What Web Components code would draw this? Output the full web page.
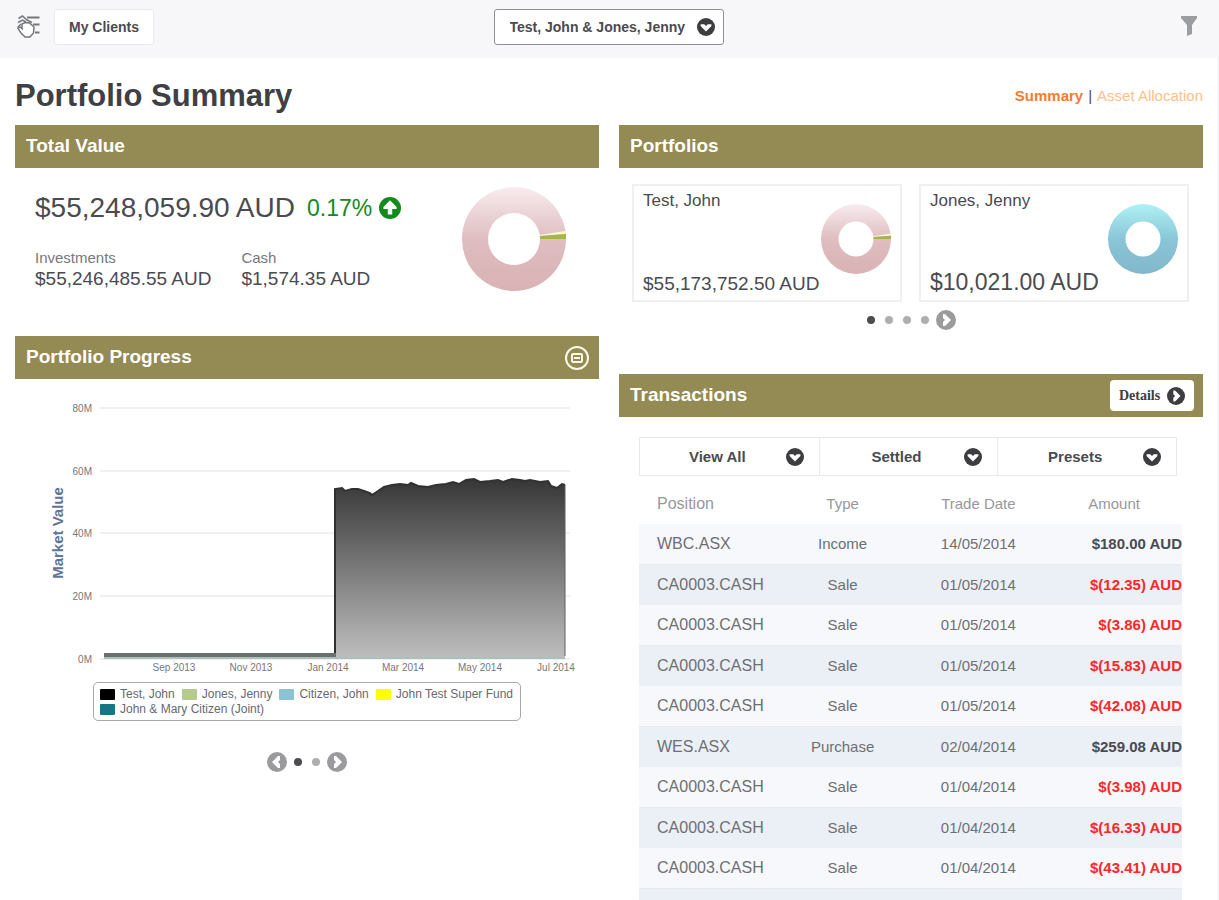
<!DOCTYPE html>
<html lang="en">
<head>
  <meta charset="UTF-8">
  <meta name="viewport" content="width=device-width, initial-scale=1">
  <title>Portfolio Summary</title>
  <style>
    :root {
      --bar: #938a54;
      --ink: #4a4b50;
      --muted: #97989c;
      --line: #e9e9eb;
      --soft: #f7f7fa;
      --negative: #fb2828;
      --accent: #f57c2c;
    }
    body {
      margin: 0;
      font-family: "Liberation Sans", Arial, sans-serif;
      color: var(--ink);
      background: #fff;
    }
  </style>
</head>
<body>
  <portfolio-app></portfolio-app>

  <script>
    // Small helper: attach an open shadow root and fill it from a template
    function render(host, html) {
      const template = document.createElement('template');
      template.innerHTML = html;
      host.attachShadow({ mode: 'open' }).appendChild(template.content.cloneNode(true));
    }

    // Round arrow icon, dir is down, right, left or up
    class RoundIcon extends HTMLElement {
      connectedCallback() {
        if (this.shadowRoot) return;
        const shapes = {
          down: '<path d="M4 7 H8 L10 9 L12 7 H16 V9 L10 15 L4 9 Z" />',
          right: '<path d="M7 4 H9 L15 10 L9 16 H7 V12 L9 10 L7 8 Z" />',
          left: '<path d="M13 4 H11 L5 10 L11 16 H13 V12 L11 10 L13 8 Z" />',
          up: '<path d="M10 3 L16 9 V11 H12 V16 H8 V11 H4 V9 Z" />'
        };
        render(this, `
          <style>
            :host { display: inline-block; width: 18px; height: 18px; flex: none; }
            svg { display: block; width: 100%; height: 100%; }
            circle { fill: currentColor; }
            path { fill: #fff; }
          </style>
          <svg viewBox="0 0 20 20" aria-hidden="true">
            <circle cx="10" cy="10" r="10" />
            ${shapes[this.getAttribute('dir')]}
          </svg>
        `);
      }
    }

    // Drop-down with the round chevron lying over its right end
    class DropDown extends HTMLElement {
      connectedCallback() {
        if (this.shadowRoot) return;
        render(this, `
          <style>
            :host { display: block; position: relative; }
            select {
              appearance: none;
              display: block;
              box-sizing: border-box;
              width: 100%;
              height: var(--drop-height, 37px);
              padding: var(--drop-padding, 0 50px 0 26px);
              border: var(--drop-border, 0);
              border-radius: 3px;
              background: #fff;
              color: var(--ink);
              font: bold var(--drop-size, 15px) "Liberation Sans", Arial, sans-serif;
              text-align-last: var(--drop-align, center);
            }
            round-icon {
              position: absolute;
              top: 0;
              bottom: 0;
              right: var(--drop-icon, 15px);
              margin: auto;
              color: #3d3d40;
              pointer-events: none;
            }
          </style>
          <select aria-label="${this.getAttribute('label')}">
            <option>${this.getAttribute('value').replace('&', '&amp;')}</option>
          </select>
          <round-icon dir="down"></round-icon>
        `);
      }
    }

    class AppHeader extends HTMLElement {
      constructor() {
        super();
        render(this, `
          <style>
            :host {
              display: grid;
              grid-template-columns: 1fr 230px 1fr;
              align-items: center;
              height: 58px;
              padding: 0 16px 4px;
              box-sizing: border-box;
              background: var(--soft);
            }
            .left { display: flex; align-items: center; gap: 12px; }
            .right { display: flex; justify-content: flex-end; }
            button { padding: 0; border: 0; background: none; cursor: pointer; }
            svg { display: block; }
            .clients {
              height: 36px;
              width: 100px;
              border: 1px solid var(--line);
              border-radius: 3px;
              background: #fff;
              color: var(--ink);
              font: bold 14px "Liberation Sans", Arial, sans-serif;
            }
            drop-down {
              --drop-height: 36px;
              --drop-size: 14px;
              --drop-align: left;
              --drop-padding: 0 36px 0 15px;
              --drop-border: 1px solid #8d8f94;
              --drop-icon: 9px;
            }
          </style>
          <div class="left">
            <button aria-label="Menu">
              <svg width="26" height="26" viewBox="0 0 52 52" fill="none" stroke="#77787d" stroke-width="3">
                <path d="M22 7 H47 M34 21 H47 M38 37 H47" stroke-width="4" />
                <path d="M5 9 L13 4 L22 12 L32 17" />
                <path d="M4 17 L13 12 L20 16" />
                <path d="M3 27 L10 20" />
                <path d="M12 28 L12 20 L18 17 L27 18 L36 26 L35 38 L28 46 H18 L10 38 L4 29 L8 26 L14 31" fill="#fff" />
              </svg>
            </button>
            <button class="clients">My Clients</button>
          </div>
          <drop-down label="Client" value="Test, John &amp; Jones, Jenny"></drop-down>
          <div class="right">
            <button aria-label="Filter">
              <svg width="24" height="24" viewBox="0 0 24 24">
                <path d="M4 1 H20 V3 L15 10 V19 L10 21 V10 L4 3 Z" fill="#9c9da1" />
              </svg>
            </button>
          </div>
        `);
      }
    }

    // Olive title bar with content below
    class DashPanel extends HTMLElement {
      constructor() {
        super();
        render(this, `
          <style>
            :host { display: block; }
            header {
              display: flex;
              align-items: center;
              justify-content: space-between;
              height: 43px;
              padding: 0 9px 0 11px;
              background: var(--bar);
            }
            h2 { margin: 0; padding-bottom: 2px; font-size: 19px; line-height: 22px; color: #fff; }
          </style>
          <header><h2></h2><slot name="action"></slot></header>
          <slot></slot>
        `);
      }
      connectedCallback() {
        this.shadowRoot.querySelector('h2').textContent = this.getAttribute('heading');
      }
    }

    class DonutChart extends HTMLElement {
      connectedCallback() {
        if (this.shadowRoot) return;
        const blue = this.getAttribute('tone') === 'blue';
        const stops = blue ? ['#aef2f4', '#8ac6d8', '#82b6cb'] : ['#f8ecee', '#dfbdc0', '#d9b2b5'];
        render(this, `
          <style>
            :host { display: block; flex: none; width: 104px; height: 104px; }
            svg { display: block; width: 100%; height: 100%; }
          </style>
          <svg viewBox="0 0 104 104" aria-hidden="true">
            <defs>
              <linearGradient id="ring" x1="0" y1="0" x2="0" y2="1">
                <stop offset="0" stop-color="${stops[0]}" />
                <stop offset="50%" stop-color="${stops[1]}" />
                <stop offset="1" stop-color="${stops[2]}" />
              </linearGradient>
            </defs>
            <path fill="url(#ring)" fill-rule="evenodd"
              d="M52 0 A52 52 0 1 1 52 104 A52 52 0 1 1 52 0 Z M52 26 A26 26 0 1 0 52 78 A26 26 0 1 0 52 26 Z" />
            ${blue ? '' : `
              <path fill="#fbf6cf" d="M77 48 L103 44 L104 47 L78 49 Z" />
              <path fill="#a3b64a" d="M78 49 L104 47 V52 H78 Z" />
            `}
          </svg>
        `);
      }
    }

    class TotalValue extends HTMLElement {
      constructor() {
        super();
        render(this, `
          <style>
            :host {
              display: flex;
              justify-content: space-between;
              align-items: flex-start;
              padding: 19px 33px 45px 20px;
            }
            .total { display: flex; align-items: center; gap: 12px; margin: 5px 0 23px; line-height: 32px; font-size: 28px; }
            .change { display: flex; align-items: center; gap: 7px; font-size: 23px; color: #128a1c; }
            round-icon { width: 22px; height: 22px; }
            dl { display: flex; gap: 30px; margin: 0; line-height: 21px; }
            dt { font-size: 15px; color: #77787c; }
            dd { margin: 0; font-size: 19px; }
          </style>
          <div>
            <div class="total">
              <span>$55,248,059.90 AUD</span>
              <span class="change">0.17% <round-icon dir="up"></round-icon></span>
            </div>
            <dl>
              <div><dt>Investments</dt><dd>$55,246,485.55 AUD</dd></div>
              <div><dt>Cash</dt><dd>$1,574.35 AUD</dd></div>
            </dl>
          </div>
          <donut-chart></donut-chart>
        `);
      }
    }

    class PortfolioCard extends HTMLElement {
      constructor() {
        super();
        render(this, `
          <style>
            :host {
              display: flex;
              justify-content: space-between;
              align-items: center;
              box-sizing: border-box;
              height: 118px;
              padding: 0 9px;
              border: 2px solid #f0f0f2;
            }
            .text {
              display: flex;
              flex-direction: column;
              justify-content: space-between;
              align-self: stretch;
              padding: 3px 0 4px;
              white-space: nowrap;
            }
            .name { font-size: 17px; line-height: 24px; }
            .value { font-size: 19px; line-height: 24px; }
            :host(.large) .value { font-size: 23px; line-height: 28px; }
            donut-chart { width: 70px; height: 70px; margin-top: -8px; }
          </style>
          <div class="text">
            <span class="name"></span>
            <span class="value"></span>
          </div>
        `);
      }
      connectedCallback() {
        const root = this.shadowRoot;
        root.querySelector('.name').textContent = this.getAttribute('name');
        root.querySelector('.value').textContent = this.getAttribute('value');
        if (root.querySelector('donut-chart')) return;
        const donut = document.createElement('donut-chart');
        donut.setAttribute('tone', this.getAttribute('tone'));
        root.appendChild(donut);
      }
    }

    // Pager: dots with optional arrows on both sides
    class PageDots extends HTMLElement {
      connectedCallback() {
        if (this.shadowRoot) return;
        let dots = '';
        for (let i = 1; i <= Number(this.getAttribute('count')); i++) {
          dots += `<button class="dot" aria-label="Page ${i}"></button>`;
        }
        const arrow = (dir, label) =>
          `<button class="arrow" aria-label="${label}"><round-icon dir="${dir}"></round-icon></button>`;
        render(this, `
          <style>
            :host { display: flex; justify-content: center; align-items: center; gap: 7px; height: 20px; }
            button { padding: 0; border: 0; background: none; cursor: pointer; }
            .dots { display: flex; gap: 10px; }
            .dot { width: 8px; height: 8px; border-radius: 50%; background: #aeaeb1; }
            .dot:first-child { background: #4c4c50; }
            .arrow { height: 20px; color: #9b9b9e; }
            round-icon { width: 20px; height: 20px; }
          </style>
          ${this.hasAttribute('back') ? arrow('left', 'Previous') : ''}
          <div class="dots">${dots}</div>
          ${arrow('right', 'Next')}
        `);
      }
    }

    class ProgressChart extends HTMLElement {
      constructor() {
        super();
        const grid = [['80M', 29], ['60M', 92], ['40M', 154], ['20M', 217], ['0M', 280]]
          .map(([label, y]) => `
            <line x1="85" x2="555" y1="${y}" y2="${y}" />
            <text x="77" y="${y + 4}" text-anchor="end">${label}</text>`).join('');
        const months = [['Sep 2013', 159], ['Nov 2013', 236], ['Jan 2014', 313], ['Mar 2014', 388], ['May 2014', 465], ['Jul 2014', 541]]
          .map(([label, x]) => `
            <line x1="${x}" x2="${x}" y1="280" y2="284" />
            <text x="${x}" y="292" text-anchor="middle">${label}</text>`).join('');
        // Market value of the main portfolio, in chart units
        const points = [
          [320, 110], [327, 109], [330, 112], [337, 110], [343, 110], [349, 112], [355, 114], [357, 116],
          [363, 112], [369, 108], [377, 106], [385, 105], [393, 106], [396, 104], [403, 107], [413, 108],
          [421, 106], [431, 105], [438, 103], [444, 105], [451, 101], [459, 100], [465, 103], [475, 102],
          [483, 101], [488, 103], [497, 100], [505, 101], [510, 102], [515, 101], [525, 103], [533, 102],
          [536, 107], [542, 109], [547, 105], [550, 106]
        ].map(p => p.join(' ')).join(' L');
        render(this, `
          <style>
            :host { display: block; }
            svg { display: block; width: 100%; }
            text { font: 10px "Liberation Sans", Arial, sans-serif; fill: #77777b; }
            .axis { font-size: 15px; font-weight: bold; fill: #5f7596; }
            line { stroke: #f0f0f1; stroke-width: 2; }
          </style>
          <svg viewBox="0 0 584 298">
            <defs>
              <linearGradient id="fade" x1="0" y1="0" x2="0" y2="1">
                <stop offset="0" stop-color="#363636" />
                <stop offset="1" stop-color="#bdbdbd" />
              </linearGradient>
            </defs>
            ${grid}
            ${months}
            <text class="axis" transform="translate(48 154) rotate(-90)" text-anchor="middle">Market Value</text>
            <path d="M320 278 L${points} V278 Z" fill="url(#fade)" />
            <path d="M320 276 L${points}" fill="none" stroke="#303232" stroke-width="2" />
            <path d="M550 106 V277" stroke="#5c5f5f" stroke-width="1" />
            <path d="M89 276 H321" stroke="#6a706f" stroke-width="4" />
            <path d="M89 279 H550" stroke="#a9c0bb" stroke-width="2" />
          </svg>
        `);
      }
    }

    class ChartLegend extends HTMLElement {
      constructor() {
        super();
        const items = [
          ['Test, John', '#000'],
          ['Jones, Jenny', '#b5cb8d'],
          ['Citizen, John', '#8cc3d4'],
          ['John Test Super Fund', '#ff0'],
          ['John &amp; Mary Citizen (Joint)', '#1a7486']
        ].map(([name, colour]) => `<li><i style="background:${colour}"></i>${name}</li>`).join('');
        render(this, `
          <style>
            :host { display: block; }
            ul {
              display: flex;
              flex-wrap: wrap;
              column-gap: 7px;
              box-sizing: border-box;
              width: fit-content;
              max-width: 428px;
              margin: 5px auto 0;
              padding: 4px 5px 3px 6px;
              border: 1px solid #a9a9ac;
              border-radius: 5px;
              list-style: none;
            }
            li { display: flex; align-items: center; gap: 5px; font-size: 12px; line-height: 15px; color: #68696e; }
            i { width: 15px; height: 11px; border-radius: 1px; }
          </style>
          <ul>${items}</ul>
        `);
      }
    }

    class TransactionTable extends HTMLElement {
      constructor() {
        super();
        const rows = [
          ['WBC.ASX', 'Income', '14/05/2014', '$180.00 AUD'],
          ['CA0003.CASH', 'Sale', '01/05/2014', '$(12.35) AUD'],
          ['CA0003.CASH', 'Sale', '01/05/2014', '$(3.86) AUD'],
          ['CA0003.CASH', 'Sale', '01/05/2014', '$(15.83) AUD'],
          ['CA0003.CASH', 'Sale', '01/05/2014', '$(42.08) AUD'],
          ['WES.ASX', 'Purchase', '02/04/2014', '$259.08 AUD'],
          ['CA0003.CASH', 'Sale', '01/04/2014', '$(3.98) AUD'],
          ['CA0003.CASH', 'Sale', '01/04/2014', '$(16.33) AUD'],
          ['CA0003.CASH', 'Sale', '01/04/2014', '$(43.41) AUD'],
          ['', '', '', '']
        ].map(row => {
          const negative = row[3].includes('(') ? ' class="negative"' : '';
          return `<tr><td>${row[0]}</td><td>${row[1]}</td><td>${row[2]}</td><td${negative}>${row[3]}</td></tr>`;
        }).join('');
        render(this, `
          <style>
            :host { display: block; padding: 20px 21px 0 20px; }
            .filters {
              display: grid;
              grid-template-columns: repeat(3, 1fr);
              margin-right: 5px;
              border: 1px solid var(--line);
            }
            drop-down + drop-down { border-left: 1px solid var(--line); }
            table { width: 100%; table-layout: fixed; border-collapse: collapse; font-size: 15px; line-height: 18px; }
            th { height: 40px; padding: 8px 0 0; font-weight: normal; color: var(--muted); }
            td { height: 40px; padding: 0; text-align: center; color: #6e6f73; }
            th:first-child, td:first-child { padding-left: 18px; text-align: left; font-size: 16px; }
            td:last-child { text-align: right; font-weight: bold; color: var(--ink); }
            td.negative:last-child { color: var(--negative); }
            tbody tr { background: #f6f8fb; }
            tbody tr:nth-child(even) { background: #ebeff6; border-top: 1px solid #e8ebf0; }
          </style>
          <div class="filters">
            <drop-down label="View" value="View All"></drop-down>
            <drop-down label="Status" value="Settled"></drop-down>
            <drop-down label="Period" value="Presets"></drop-down>
          </div>
          <table>
            <thead><tr><th>Position</th><th>Type</th><th>Trade Date</th><th>Amount</th></tr></thead>
            <tbody>${rows}</tbody>
          </table>
        `);
      }
    }

    class PortfolioApp extends HTMLElement {
      constructor() {
        super();
        render(this, `
          <style>
            :host {
              display: block;
              box-sizing: border-box;
              height: 100vh;
              overflow: hidden;
              border-right: 2px solid var(--soft);
            }
            main { padding: 0 14px 0 15px; }
            .title {
              display: flex;
              align-items: center;
              justify-content: space-between;
              padding: 21px 0 12px;
            }
            h1 { margin: 0; font-size: 31px; line-height: 34px; color: #3f4044; }
            nav { display: flex; gap: 5px; font-size: 15px; line-height: 20px; }
            nav a { color: #fbbf8f; text-decoration: none; }
            nav a[aria-current] { color: var(--accent); font-weight: bold; }
            .columns { display: grid; grid-template-columns: 1fr 1fr; gap: 20px; align-items: start; }
            .cards { display: grid; grid-template-columns: 1fr 1fr; gap: 17px; padding: 16px 14px 8px 13px; }
            .cards + page-dots { margin-bottom: 44px; }
            chart-legend + page-dots { margin-top: 31px; }
            button { padding: 0; border: 0; background: none; cursor: pointer; }
            button svg { display: block; }
            .details {
              display: flex;
              align-items: center;
              justify-content: center;
              gap: 7px;
              width: 84px;
              height: 31px;
              border-radius: 4px;
              background: #fff;
              color: #3d3d40;
              font: bold 14px "Liberation Serif", serif;
            }
          </style>
          <app-header></app-header>
          <main>
            <div class="title">
              <h1>Portfolio Summary</h1>
              <nav>
                <a href="#summary" aria-current="page">Summary</a>
                <span>|</span>
                <a href="#allocation">Asset Allocation</a>
              </nav>
            </div>
            <div class="columns">
              <div>
                <dash-panel heading="Total Value"><total-value></total-value></dash-panel>
                <dash-panel heading="Portfolio Progress">
                  <button slot="action" aria-label="Expand chart">
                    <svg width="26" height="26" viewBox="0 0 26 26" fill="none" stroke="#fbf8ea" stroke-width="2">
                      <circle cx="13" cy="13" r="11" />
                      <rect x="8" y="9" width="10" height="8" rx="1" />
                      <path d="M10 13 H16" />
                    </svg>
                  </button>
                  <progress-chart></progress-chart>
                  <chart-legend></chart-legend>
                  <page-dots count="2" back></page-dots>
                </dash-panel>
              </div>
              <div>
                <dash-panel heading="Portfolios">
                  <div class="cards">
                    <portfolio-card name="Test, John" value="$55,173,752.50 AUD" tone="pink"></portfolio-card>
                    <portfolio-card class="large" name="Jones, Jenny" value="$10,021.00 AUD" tone="blue"></portfolio-card>
                  </div>
                  <page-dots count="4"></page-dots>
                </dash-panel>
                <dash-panel heading="Transactions">
                  <button slot="action" class="details">Details <round-icon dir="right"></round-icon></button>
                  <transaction-table></transaction-table>
                </dash-panel>
              </div>
            </div>
          </main>
        `);
      }
    }

    // Register the custom elements
    customElements.define('round-icon', RoundIcon);
    customElements.define('drop-down', DropDown);
    customElements.define('app-header', AppHeader);
    customElements.define('dash-panel', DashPanel);
    customElements.define('donut-chart', DonutChart);
    customElements.define('total-value', TotalValue);
    customElements.define('portfolio-card', PortfolioCard);
    customElements.define('page-dots', PageDots);
    customElements.define('progress-chart', ProgressChart);
    customElements.define('chart-legend', ChartLegend);
    customElements.define('transaction-table', TransactionTable);
    customElements.define('portfolio-app', PortfolioApp);
  </script>
</body>
</html>
